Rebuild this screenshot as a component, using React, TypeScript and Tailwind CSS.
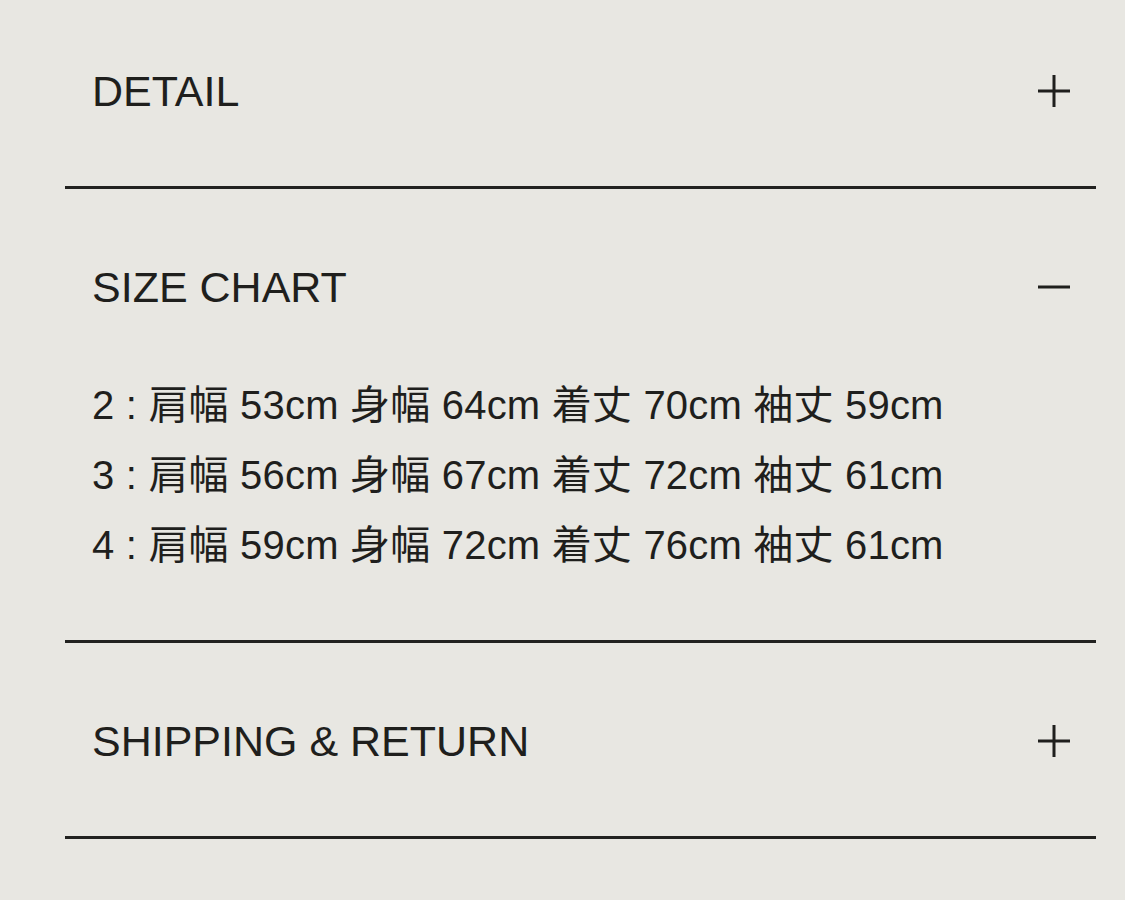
import React from "react";

const font = { fontFamily: '"Liberation Sans", Arial, "Noto Sans CJK JP", sans-serif' };

function Plus() {
  return (
    <svg width="34" height="34" viewBox="0 0 34 34" className="shrink-0">
      <path d="M17 1V33M1 17H33" stroke="#1f1f1d" strokeWidth="3" fill="none" />
    </svg>
  );
}
function Minus() {
  return (
    <svg width="34" height="34" viewBox="0 0 34 34" className="shrink-0">
      <path d="M1 17H33" stroke="#1f1f1d" strokeWidth="3" fill="none" />
    </svg>
  );
}

const rows = [
  "2 : 肩幅 53cm 身幅 64cm 着丈 70cm 袖丈 59cm",
  "3 : 肩幅 56cm 身幅 67cm 着丈 72cm 袖丈 61cm",
  "4 : 肩幅 59cm 身幅 72cm 着丈 76cm 袖丈 61cm",
];

export default function App() {
  return (
    <div className="w-[1125px] h-[900px] bg-[#e8e7e2] text-[#1f1f1d] overflow-hidden" style={font}>
      <div className="ml-[65px] w-[1031px]">
        <section className="border-b-[3px] border-[#222220]">
          <div className="pt-[66px] pb-[70px] pl-[27px] pr-[25px] flex items-center justify-between">
            <span className="text-[43px] leading-[50px]">DETAIL</span>
            <Plus />
          </div>
        </section>
        <section className="border-b-[3px] border-[#222220]">
          <div className="pt-[73px] pl-[27px] pr-[25px] flex items-center justify-between">
            <span className="text-[43px] leading-[50px]">SIZE CHART</span>
            <Minus />
          </div>
          <div className="mt-[58px] pb-[60px] pl-[27px] pr-[25px] text-[40px] leading-[70px] tracking-[0.2px]">
            {rows.map((r) => (
              <div key={r} className="whitespace-nowrap">{r}</div>
            ))}
          </div>
        </section>
        <section className="border-b-[3px] border-[#222220]">
          <div className="pt-[73px] pb-[70px] pl-[27px] pr-[25px] flex items-center justify-between">
            <span className="text-[43px] leading-[50px]">SHIPPING &amp; RETURN</span>
            <Plus />
          </div>
        </section>
      </div>
    </div>
  );
}
